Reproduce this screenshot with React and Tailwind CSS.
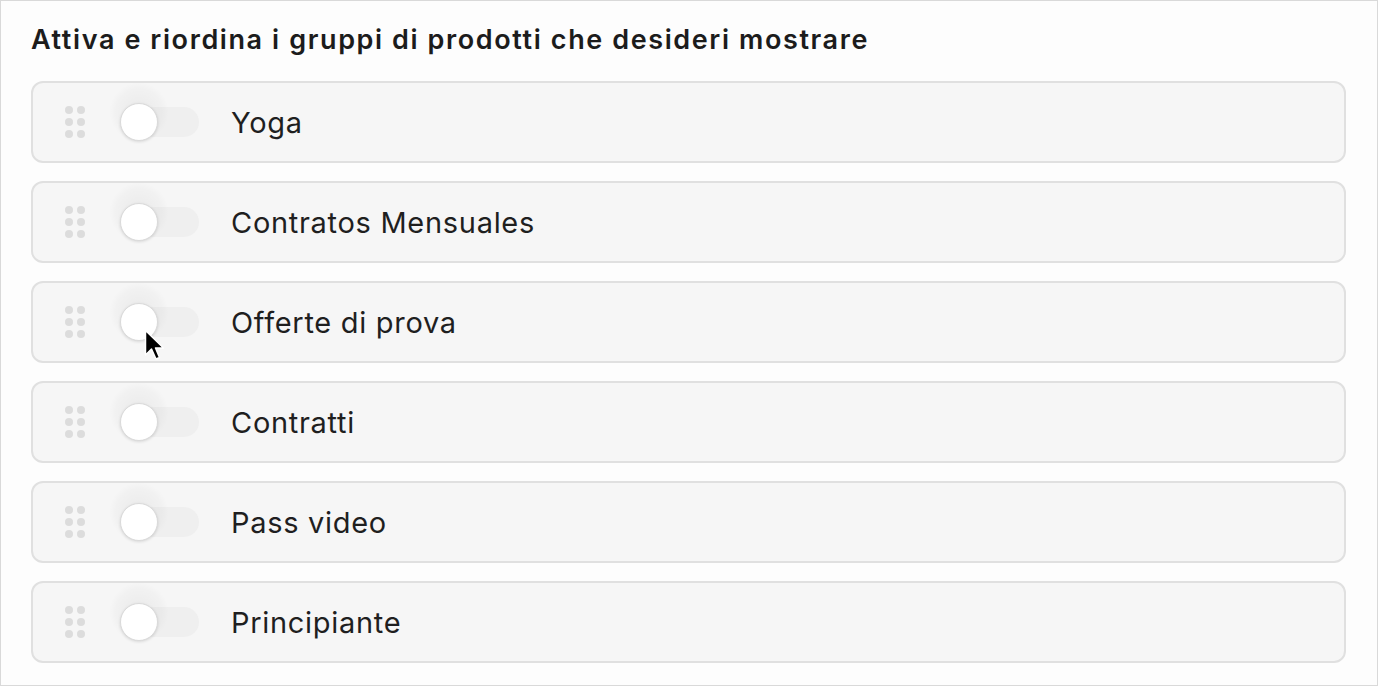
import React from "react";

const items = ["Yoga", "Contratos Mensuales", "Offerte di prova", "Contratti", "Pass video", "Principiante"];

function Handle() {
  return (
    <div className="grid grid-cols-2 gap-x-[4px] gap-y-[4px] w-[20px]">
      {Array.from({ length: 6 }).map((_, i) => (
        <span key={i} className="w-[8px] h-[8px] rounded-full bg-[#dcdcdc]" />
      ))}
    </div>
  );
}

function Toggle({ cursor }) {
  return (
    <div className="relative w-[80px] h-[40px] flex items-center">
      <div className="absolute left-[2px] right-0 top-[5px] h-[30px] rounded-full bg-[#efefef]" />
      <div className="absolute left-[-10px] top-[-20px] w-[60px] h-[60px] rounded-full bg-[radial-gradient(circle,rgba(0,0,0,0.05)_0%,rgba(0,0,0,0.02)_55%,rgba(0,0,0,0)_70%)]" />
      <div className="absolute left-[1px] top-[1px] w-[38px] h-[38px] rounded-full bg-white border border-[#dadada] shadow-[0_1px_3px_rgba(0,0,0,0.12)]" />
      {cursor && (
        <svg className="absolute left-[25px] top-[27px]" width="22" height="34" viewBox="0 0 22 34">
          <path d="M1.5 1.5 L1.5 26 L7.5 20 L12 30 L15.5 28.5 L11.5 19 L19.5 19 Z" fill="#000" stroke="#fff" strokeWidth="1.5" strokeLinejoin="round" />
        </svg>
      )}
    </div>
  );
}

export default function App() {
  return (
    <div className="w-[1378px] h-[686px] bg-[#fdfdfd] border border-[#d9d9d9] box-border pl-[30px] pr-[31px] pt-[21px]" style={{ fontFamily: "Inter, 'Noto Sans', sans-serif" }}>
      <h1 className="text-[27px] leading-[36px] font-semibold text-[#1c1c1c] tracking-[1.6px]">
        Attiva e riordina i gruppi di prodotti che desideri mostrare
      </h1>
      <div className="mt-[23px] flex flex-col gap-[18px]">
        {items.map((label, i) => (
          <div key={label} className="h-[82px] rounded-[12px] border-2 border-[#e0e0e0] bg-[#f6f6f6] flex items-center pl-[32px]">
            <Handle />
            <div className="ml-[34px]">
              <Toggle cursor={i === 2} />
            </div>
            <span className="ml-[32px] pt-[2px] text-[29px] text-[#1f1f1f] tracking-[0.7px]">{label}</span>
          </div>
        ))}
      </div>
    </div>
  );
}
